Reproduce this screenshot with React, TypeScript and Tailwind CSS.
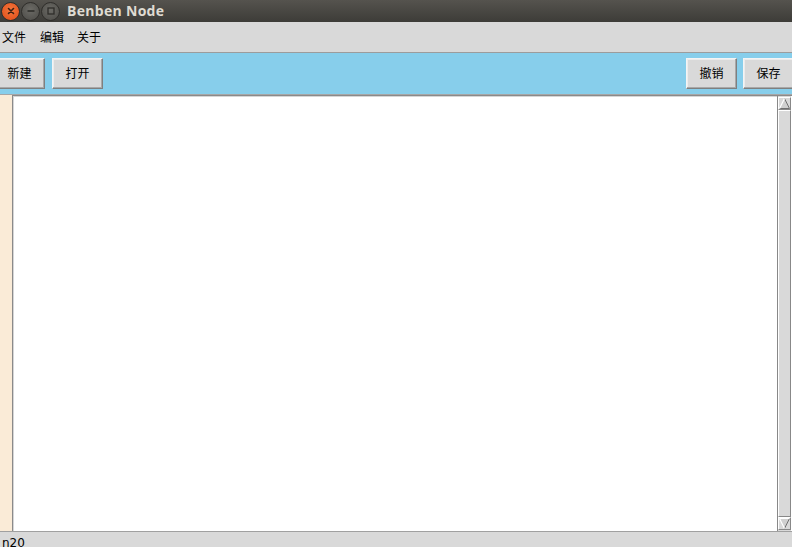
import React from "react";

const cjk = { fontFamily: '"DejaVu Sans", "Noto Sans CJK SC", sans-serif' };

function TkButton({ label, className = "" }: { label: string; className?: string }) {
  return (
    <div
      className={`w-[51px] h-[31px] flex items-center justify-center bg-[#d9d9d9] border border-t-[#f4f4f4] border-l-[#f4f4f4] border-b-[#7f7f7f] border-r-[#7f7f7f] text-[12px] text-black shrink-0 ${className}`}
      style={{ ...cjk, boxShadow: "inset -1px -1px 0 #a8a8a8, inset 1px 1px 0 #ececec" }}
    >
      {label}
    </div>
  );
}

function WinBtn({ kind }: { kind: "close" | "min" | "max" }) {
  const bg =
    kind === "close"
      ? "bg-[radial-gradient(circle_at_50%_40%,#f4773d,#df4a16)]"
      : "bg-[radial-gradient(circle_at_50%_40%,#6c6b66,#4b4a46)]";
  return (
    <div className={`w-[19px] h-[19px] rounded-full ${bg} flex items-center justify-center border border-[#2f2e2b]`}>
      <svg width="10" height="10" viewBox="0 0 10 10">
        {kind === "close" && (
          <path d="M2.5 2.5 L7.5 7.5 M7.5 2.5 L2.5 7.5" stroke="#3b2013" strokeWidth="1.6" strokeLinecap="round" />
        )}
        {kind === "min" && <path d="M1.5 5 H8.5" stroke="#2e2d2a" strokeWidth="1.6" />}
        {kind === "max" && <rect x="2" y="2" width="6" height="6" fill="none" stroke="#2e2d2a" strokeWidth="1.3" />}
      </svg>
    </div>
  );
}

export default function App() {
  return (
    <div className="w-[792px] h-[547px] overflow-hidden flex flex-col bg-[#d9d9d9]">
      {/* Title bar */}
      <div className="h-[22px] shrink-0 flex items-center bg-gradient-to-b from-[#55534e] to-[#3d3c38] pl-[1px]">
        <div className="flex items-center gap-[1px]">
          <WinBtn kind="close" />
          <WinBtn kind="min" />
          <WinBtn kind="max" />
        </div>
        <div
          className="ml-[7px] text-[14px] font-bold text-[#dfdbd2] leading-none tracking-[0.3px]"
          style={{ fontFamily: '"Open Sans", "DejaVu Sans", sans-serif' }}
        >
          Benben Node
        </div>
      </div>

      {/* Menu bar */}
      <div className="h-[31px] shrink-0 flex items-center pt-[2px] bg-[#d9d9d9] border-b border-[#9c9c9c] text-[12px] text-black" style={cjk}>
        <span className="ml-[2px]">文件</span>
        <span className="ml-[14px]">编辑</span>
        <span className="ml-[13px]">关于</span>
      </div>

      {/* Toolbar */}
      <div className="h-[42px] shrink-0 bg-[#87ceeb] flex items-start pt-[5px] border-b border-[#a6a6a6]">
        <TkButton label="新建" className="ml-[-6px]" />
        <TkButton label="打开" className="ml-[7px]" />
        <div className="flex-1" />
        <TkButton label="撤销" />
        <TkButton label="保存" className="ml-[6px] mr-[-2px]" />
      </div>

      {/* Body */}
      <div className="h-[436px] shrink-0 flex bg-[#d9d9d9]">
        <div className="w-[12px] bg-[#faebd7]" />
        <div className="flex-1 flex border-t border-l border-[#8a8a8a] bg-white">
          <div className="flex-1 bg-white border-t border-l border-[#d6d6d6]" />
          <div className="w-[14px] flex flex-col bg-[#d9d9d9] border-l border-[#888] pt-[1px] pb-[1px] mr-[1px]">
            <div className="h-[13px] shrink-0 flex items-center justify-center bg-[#d9d9d9] border border-t-white border-l-white border-b-[#888] border-r-[#888]">
              <svg width="11" height="11" viewBox="0 0 11 11">
                <path d="M5.5 0.5 L10.5 10.5 H0.5 Z" fill="#d0d0d0" />
                <path d="M5.5 0.5 L10.5 10.5 H0.5" fill="none" stroke="#707070" strokeWidth="1" />
                <path d="M5.5 0.5 L0.5 10.5" stroke="#ffffff" strokeWidth="1.2" />
              </svg>
            </div>
            <div className="flex-1 bg-[#d9d9d9] border border-t-white border-l-white border-b-[#888] border-r-[#888]" />
            <div className="h-[13px] shrink-0 flex items-center justify-center bg-[#d9d9d9] border border-t-white border-l-white border-b-[#888] border-r-[#888]">
              <svg width="11" height="11" viewBox="0 0 11 11">
                <path d="M0.5 0.5 H10.5 L5.5 10.5 Z" fill="#d0d0d0" />
                <path d="M10.5 0.5 L5.5 10.5" fill="none" stroke="#707070" strokeWidth="1" />
                <path d="M0.5 0.5 H10.5 M0.5 0.5 L5.5 10.5" stroke="#ffffff" strokeWidth="1.2" />
              </svg>
            </div>
          </div>
        </div>
      </div>

      {/* Status bar */}
      <div className="h-[24px] shrink-0 bg-[#d9d9d9] border-t border-[#a0a0a0] text-[12px] text-black pl-[2px] pt-[4px] leading-[14px]" style={cjk}>
        n20
      </div>
    </div>
  );
}
